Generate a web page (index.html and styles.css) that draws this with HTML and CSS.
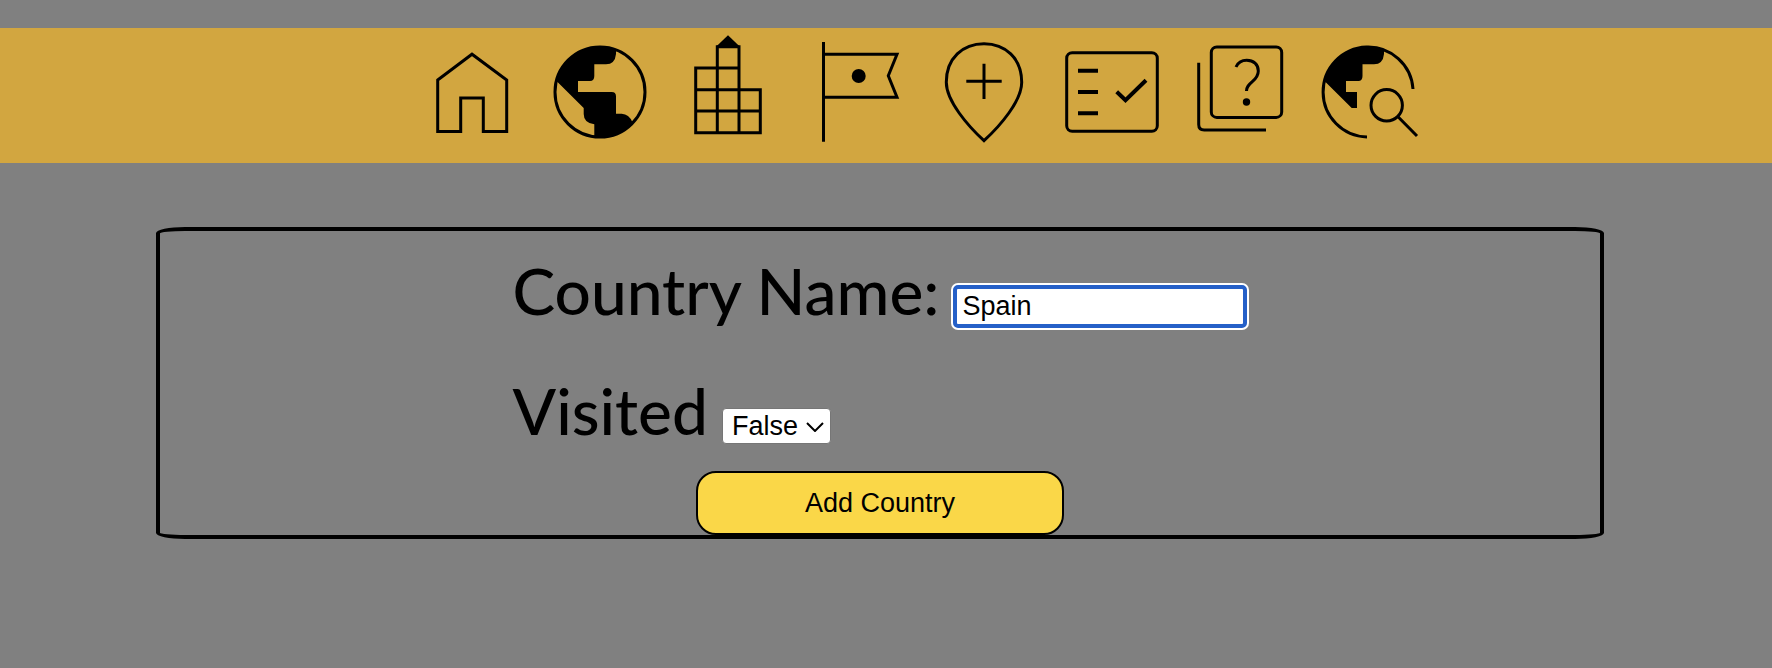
FILE: index.html
```html
<!DOCTYPE html>
<html lang="en">
<head>
<meta charset="utf-8">
<title>Add Country</title>
<link rel="stylesheet" href="styles.css">
</head>
<body>
<nav class="nav" aria-label="Main">
  <a class="nav-link" href="#home" aria-label="Home">
    <svg class="icon" viewBox="0 0 128 135"><path d="M29.7 52 64 26.2 98.7 52V103.5H75.3V70H52.7V103.5H29.7Z"/></svg>
  </a>
  <a class="nav-link" href="#countries" aria-label="Countries">
    <svg class="icon" viewBox="0 0 128 135"><circle cx="64" cy="64" r="45"/><path class="solid" d="M80 22V26Q79 36.3 70 36.3H58.3V48Q58.3 53 54 53H42V64H75.7Q80 64 80 68.3V85.7H85.7Q93 86 96.3 94A45 45 0 0 1 58.3 109V96.3Q47.7 95 47.7 86V80L20.5 53A45 45 0 0 1 80 22Z"/></svg>
  </a>
  <a class="nav-link" href="#cities" aria-label="Cities">
    <svg class="icon" viewBox="0 0 128 135"><path d="M31.7 104.7V40H75M53.3 104.7V18.7H75V104.7M31.7 61.7H96.3V104.7H31.7ZM31.7 83H96.3"/><path class="solid" d="M64 7.3 76 18.7H52Z"/></svg>
  </a>
  <a class="nav-link" href="#landmarks" aria-label="Landmarks">
    <svg class="icon" viewBox="0 0 128 135"><path d="M31.5 14V113.7M31.5 26.3H105L96.3 47.7 105 69.3H31.5"/><circle class="solid" cx="66.7" cy="48" r="7"/></svg>
  </a>
  <a class="nav-link" href="#add-place" aria-label="Add place">
    <svg class="icon" viewBox="0 0 128 135"><path d="M64 112.7C48 98 26.3 73 26.3 54.3C26.3 30 43 15.7 64 15.7S101.7 30 101.7 54.3C101.7 73 80 98 64 112.7ZM64 35.7V71M46.3 53.3H81.7"/></svg>
  </a>
  <a class="nav-link" href="#checklist" aria-label="Checklist">
    <svg class="icon" viewBox="0 0 128 135"><rect x="18.7" y="24.7" width="90.6" height="78.6" rx="5.5"/><path class="heavy" d="M30 42.7H50M30 64H50M30 85.3H50M68.7 63.7 77.5 72.2 98 52.3"/></svg>
  </a>
  <a class="nav-link" href="#quiz" aria-label="Quiz">
    <svg class="icon" viewBox="0 0 128 135"><rect x="35.3" y="19" width="70.4" height="70.4" rx="5.5"/><path d="M22.7 34.7V96.5Q22.7 102 28.2 102H90M60 39C62 34.5 66 32.3 70.7 32.3C77.5 32.3 82.3 36.5 82.3 43C82.3 47 80 50.5 76.3 53.7C72.5 57 70.5 59 70.5 63"/><circle class="solid" cx="70.5" cy="74" r="3.7"/></svg>
  </a>
  <a class="nav-link" href="#search" aria-label="Search countries">
    <svg class="icon" viewBox="0 0 128 135"><path d="M63 109A45 45 0 1 1 109 61M94 88.7 113 108"/><path class="solid" d="M80 22V26Q79 36.3 70 36.3H58.5V48Q58.5 53 54.3 53H42V64H53V80H47.7L20.5 53A45 45 0 0 1 80 22Z"/><circle cx="82.7" cy="77.3" r="15.7"/></svg>
  </a>
</nav>
<main class="content">
  <form class="card">
    <div class="fields">
      <div class="row">
        <label for="name">Country Name:</label>
        <input class="text-box" id="name" type="text" value="Spain">
      </div>
      <div class="row">
        <label for="visited">Visited</label>
        <span class="select-wrap">
          <select class="select" id="visited"><option>False</option><option>True</option></select>
          <svg class="chevron" viewBox="0 0 18 10"><path d="M1 1 9 9 17 1"/></svg>
        </span>
      </div>
    </div>
    <button class="submit" type="submit">Add Country</button>
  </form>
</main>
</body>
</html>
```
FILE: styles.css
```css
* {
  box-sizing: border-box;
}

body {
  margin: 0;
  padding-top: 28px;
  background: #808080;
  color: #000;
  font-family: Lato, sans-serif;
}

.nav {
  display: flex;
  justify-content: center;
  padding-left: 68px;
  background: #d2a640;
}

.nav-link {
  display: block;
  width: 128px;
}

.icon {
  display: block;
  width: 100%;
  fill: none;
  stroke: #000;
  stroke-width: 3;
}

.icon .solid {
  fill: #000;
  stroke: none;
}

.icon .heavy {
  stroke-width: 4;
}

.content {
  padding: 64px 168px 0 156px;
}

.card {
  display: flex;
  flex-direction: column;
  align-items: center;
  padding-top: 21px;
  border: 4px solid #000;
  border-radius: 2%;
}

.fields {
  display: grid;
  gap: 43px;
  margin-bottom: 22px;
}

.row {
  display: flex;
  align-items: baseline;
  gap: 14px;
  font-size: 64px;
  font-weight: 500;
  line-height: 77px;
}

.text-box,
.select,
.submit {
  font-family: "Liberation Sans", Arial, sans-serif;
  font-size: 27px;
  color: #000;
}

.text-box {
  width: 294px;
  height: 43px;
  padding: 0 5px;
  border: 4px solid #2560c8;
  border-radius: 5px;
  background: #fff;
  box-shadow: 0 0 0 2px #fff;
  outline: none;
}

.select-wrap {
  position: relative;
  line-height: 34px;
}

.select {
  appearance: none;
  width: 109px;
  height: 36px;
  padding: 0 9px;
  border: 1px solid #767676;
  border-radius: 4px;
  background: #fff;
}

.chevron {
  position: absolute;
  right: 7px;
  bottom: 12px;
  width: 18px;
  height: 10px;
  fill: none;
  stroke: #000;
  stroke-width: 2;
  pointer-events: none;
}

.submit {
  width: 368px;
  height: 64px;
  padding: 0;
  border: 2px solid #000;
  border-radius: 20px;
  background: #fad748;
}
```
